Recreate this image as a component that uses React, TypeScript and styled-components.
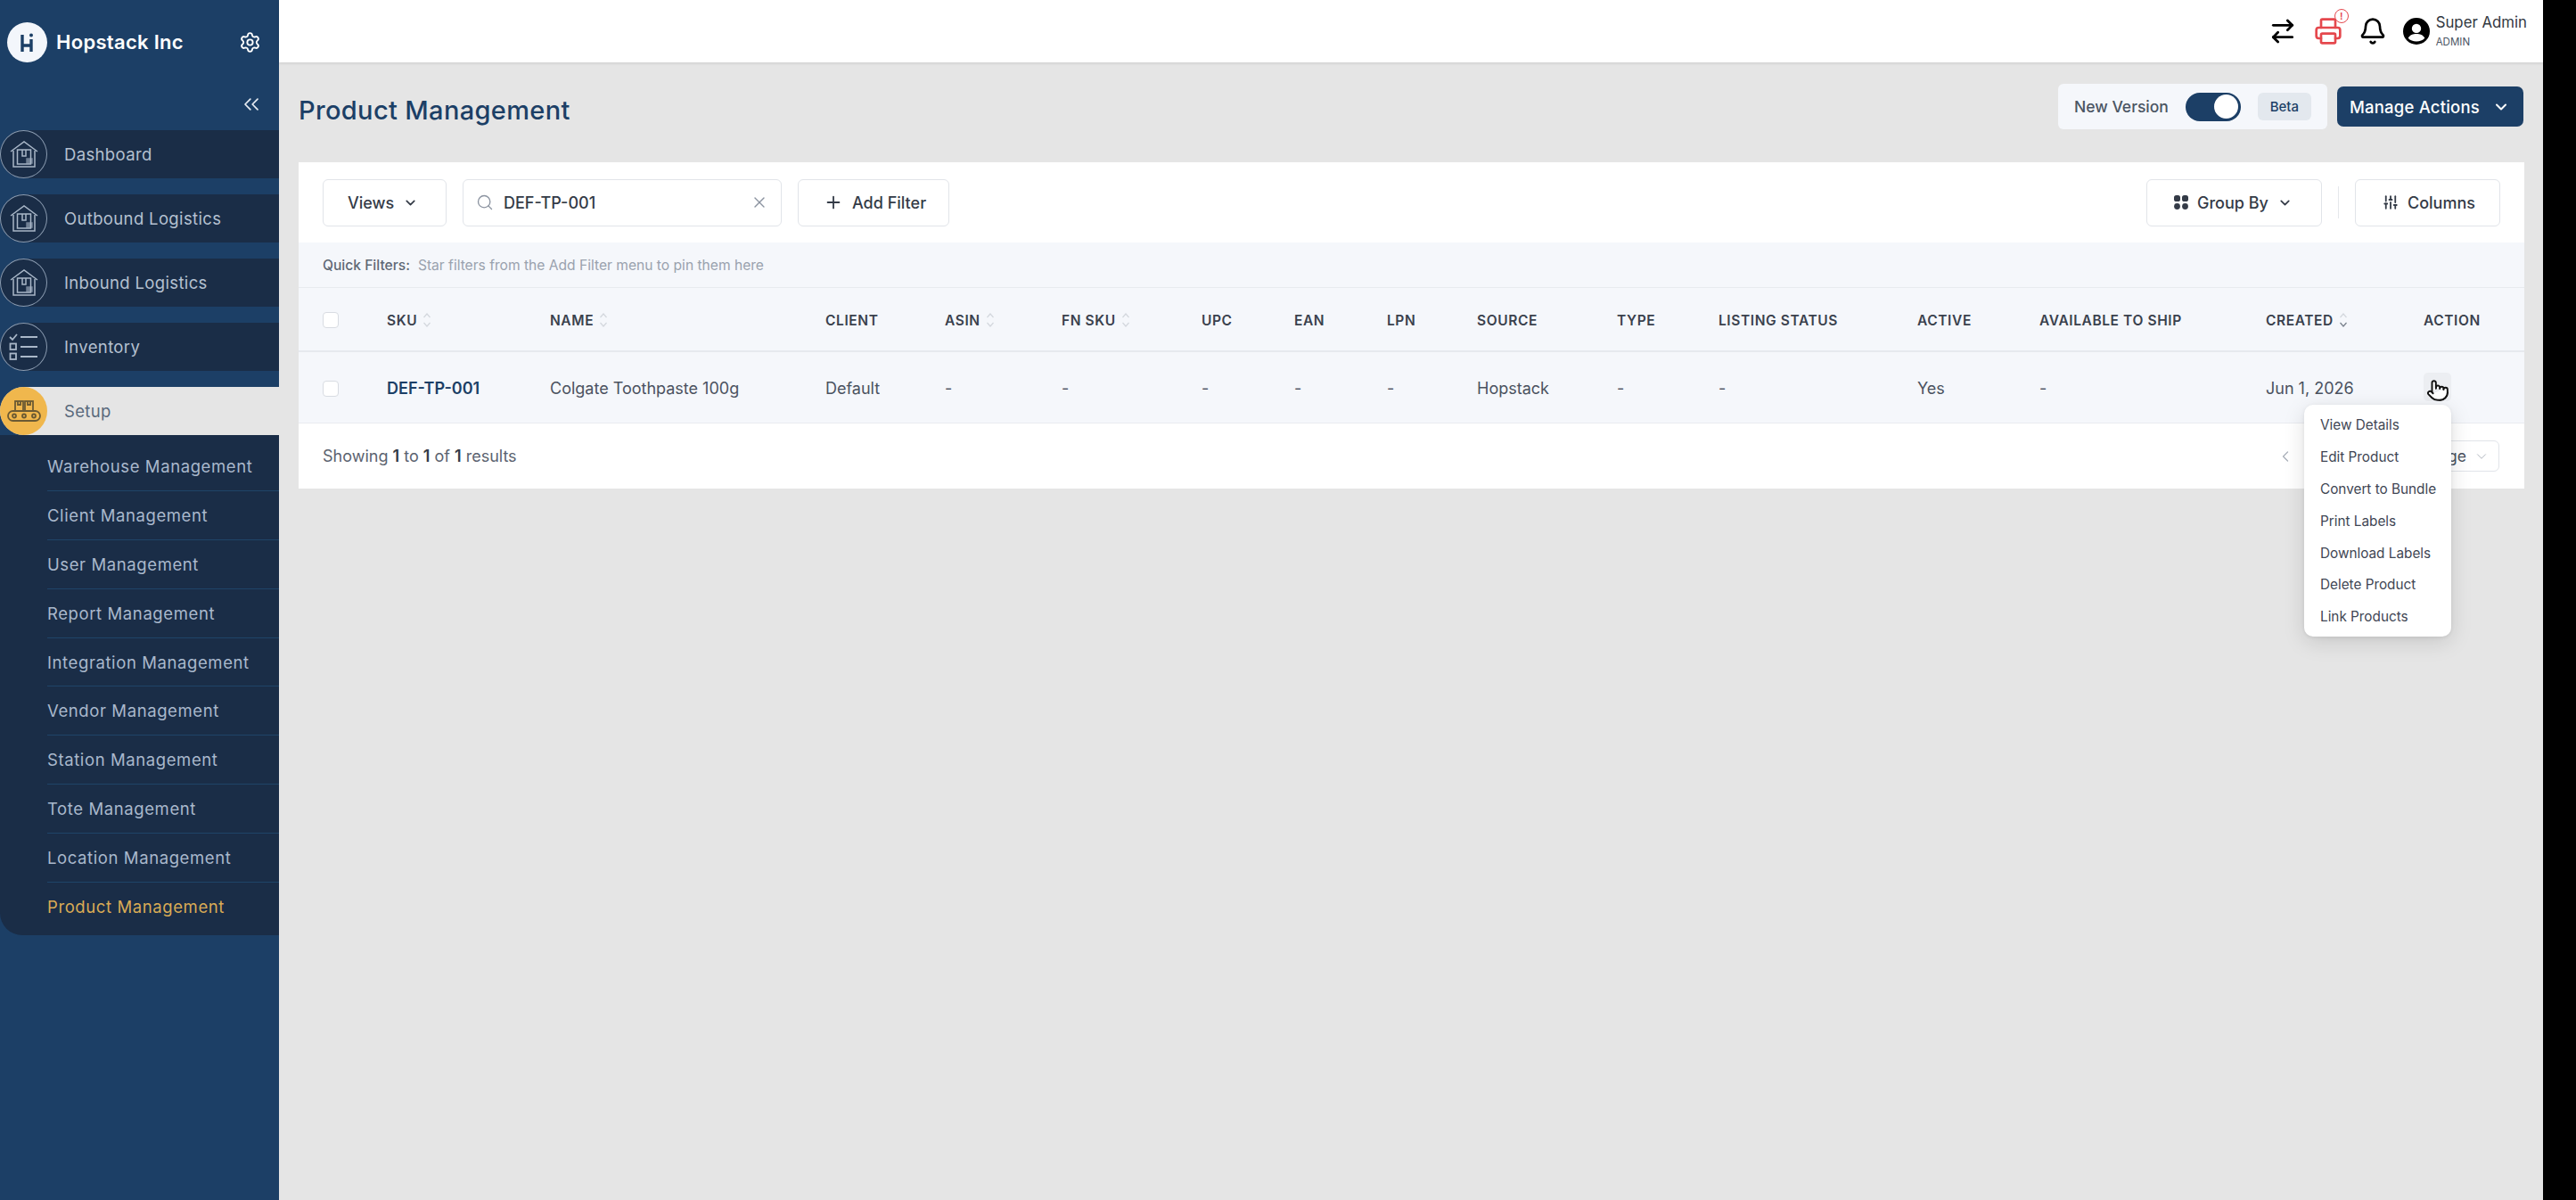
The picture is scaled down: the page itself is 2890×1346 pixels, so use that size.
import styled, { createGlobalStyle } from "styled-components";
import {
  ArrowRightLeft,
  Bell,
  ChevronDown,
  ChevronLeft,
  ChevronsLeft,
  Plus,
  Pointer,
  Printer,
  Search,
  Settings,
  SlidersVertical,
  X,
} from "lucide-react";

const NAVY = "#1c3f66";
const DARK = "#1a2d47";

const GlobalStyle = createGlobalStyle`
  html, body {
    margin: 0;
    padding: 0;
    background: #000000;
  }
  * {
    box-sizing: border-box;
  }
`;

const Page = styled.div`
  display: flex;
  width: 2853px;
  height: 1346px;
  overflow: hidden;
  background: #e5e5e5;
  font-family: "Inter", "Liberation Sans", sans-serif;
`;

/* sidebar */

const Sidebar = styled.aside`
  flex: 0 0 313px;
  display: flex;
  flex-direction: column;
  background: ${NAVY};
  color: #b4c0d0;
`;

const Brand = styled.div`
  height: 94px;
  display: flex;
  align-items: center;
  padding-left: 8px;
  padding-right: 20px;
  color: #ffffff;
`;

const BrandName = styled.div`
  flex: 1;
  margin-left: 10px;
  font-size: 22px;
  font-weight: 600;
  letter-spacing: 0.3px;
`;

const Collapse = styled.div`
  height: 52px;
  display: flex;
  align-items: flex-start;
  justify-content: flex-end;
  padding: 9px 17px 0 0;
  color: #e6ebf2;
`;

const NavList = styled.nav`
  display: flex;
  flex-direction: column;
  gap: 18px;
`;

const NavRow = styled.div<{ $active?: boolean }>`
  height: 54px;
  display: flex;
  align-items: center;
  gap: 19px;
  border-radius: 27px 0 0 27px;
  background: ${(p) => (p.$active ? "#e5e5e5" : DARK)};
  color: ${(p) => (p.$active ? "#5a6a7c" : "#b4c0d0")};
  font-size: 18.5px;
  font-weight: 400;
  letter-spacing: 0.35px;
`;

const IconCircle = styled.div<{ $active?: boolean }>`
  flex: 0 0 53px;
  height: 54px;
  display: flex;
  align-items: center;
  justify-content: center;
  border-radius: 50%;
  border: ${(p) => (p.$active ? "none" : "1.5px solid #8b9cb1")};
  background: ${(p) => (p.$active ? "#f0b74d" : DARK)};
  color: ${(p) => (p.$active ? "#6b5a33" : "#a9b7c8")};
`;

const SubMenu = styled.div`
  margin-top: -18px;
  padding: 8px 0 4px 53px;
  background: ${DARK};
  border-radius: 0 0 0 25px;
`;

const SubItem = styled.div<{ $active?: boolean }>`
  height: 54.9px;
  display: flex;
  align-items: center;
  border-bottom: 1.5px solid #1f4468;
  color: ${(p) => (p.$active ? "#d9ab55" : "#a9b8cc")};
  font-size: 18.5px;
  letter-spacing: 0.6px;
  &:last-child {
    border-bottom: none;
  }
`;

/* main */

const Main = styled.main`
  flex: 1;
  min-width: 0;
  display: flex;
  flex-direction: column;
`;

const TopBar = styled.header`
  height: 70px;
  display: flex;
  align-items: center;
  justify-content: flex-end;
  padding-right: 18px;
  background: #ffffff;
  box-shadow: 0 1px 3px rgba(0, 0, 0, 0.12);
  color: #000000;
`;

const TopIcon = styled.div<{ $mr: number }>`
  position: relative;
  display: flex;
  margin-right: ${(p) => p.$mr}px;
`;

const AlertBadge = styled.span`
  position: absolute;
  top: -9px;
  right: -7px;
  width: 16px;
  height: 16px;
  display: flex;
  align-items: center;
  justify-content: center;
  border-radius: 50%;
  background: #ffffff;
  border: 1.5px solid #e5484d;
  color: #e5484d;
  font-size: 11px;
  font-weight: 600;
`;

const UserInfo = styled.div`
  margin-left: 7px;
  display: flex;
  flex-direction: column;
  gap: 6px;
  margin-top: -1px;
`;

const UserName = styled.div`
  font-size: 16.8px;
  color: #33383f;
  line-height: 20px;
`;

const UserRole = styled.div`
  font-size: 11.5px;
  color: #4b5563;
  line-height: 13px;
`;

const PageHead = styled.div`
  height: 112px;
  display: flex;
  align-items: flex-start;
  padding: 24px 22px 0 22px;
`;

const Title = styled.h1`
  flex: 1;
  margin: 9px 0 0;
  font-size: 29px;
  line-height: 42px;
  font-weight: 500;
  color: ${NAVY};
  letter-spacing: 0.35px;
`;

const VersionPanel = styled.div`
  width: 302px;
  height: 51px;
  display: flex;
  align-items: center;
  padding-left: 18px;
  background: #f5f7fb;
  border-radius: 6px;
  font-size: 17.5px;
  font-weight: 500;
  color: #4b5563;
`;

const Toggle = styled.div`
  width: 62px;
  height: 32px;
  margin-left: 19px;
  display: flex;
  align-items: center;
  justify-content: flex-end;
  padding-right: 3px;
  border-radius: 16px;
  background: ${NAVY};
`;

const Knob = styled.div`
  width: 27px;
  height: 27px;
  border-radius: 50%;
  background: #ffffff;
`;

const BetaTag = styled.div`
  width: 60px;
  height: 31px;
  margin-left: 19px;
  display: flex;
  align-items: center;
  justify-content: center;
  border-radius: 6px;
  background: #e3e8ee;
  font-size: 15px;
  font-weight: 500;
  color: ${NAVY};
`;

const ManageButton = styled.div`
  width: 209px;
  height: 45px;
  margin: 3px 0 0 11px;
  display: flex;
  align-items: center;
  padding-left: 14px;
  gap: 14px;
  border-radius: 7px;
  background: ${NAVY};
  color: #ffffff;
  font-size: 18.5px;
  font-weight: 500;
  letter-spacing: 0.2px;
`;

const Card = styled.section`
  position: relative;
  margin: 0 21px 0 22px;
  background: #ffffff;
`;

const Toolbar = styled.div`
  height: 90px;
  display: flex;
  align-items: center;
  padding: 0 27px;
  gap: 18px;
`;

const OutlineButton = styled.div<{ $w: number; $pl: number }>`
  width: ${(p) => p.$w}px;
  height: 53px;
  display: flex;
  align-items: center;
  gap: 10px;
  padding-left: ${(p) => p.$pl}px;
  border: 1.5px solid #e1e4e9;
  border-radius: 6px;
  background: #ffffff;
  color: #343b47;
  font-size: 18px;
  font-weight: 500;
`;

const SearchBox = styled.div`
  width: 358px;
  height: 53px;
  display: flex;
  align-items: center;
  padding: 0 14px 0 14px;
  border: 1.5px solid #e1e4e9;
  border-radius: 6px;
  color: #8b93a0;
`;

const SearchValue = styled.div`
  flex: 1;
  margin-left: 11px;
  font-size: 18px;
  font-weight: 500;
  color: #343b47;
`;

const Spacer = styled.div`
  flex: 1;
`;

const Divider = styled.div`
  width: 1px;
  height: 36px;
  background: #e5e7eb;
`;

const QuickFilters = styled.div`
  height: 51px;
  display: flex;
  align-items: center;
  gap: 9px;
  padding-left: 27px;
  background: #f5f7fb;
  border-bottom: 1.5px solid #e8ebef;
  font-size: 15.6px;
  color: #9aa2ae;
`;

const QuickLabel = styled.span`
  font-weight: 500;
  color: #5f6875;
`;

const TableRow = styled.div<{ $head?: boolean }>`
  display: grid;
  grid-template-columns: 72px 183px 309px 134px 131px 157px 104px 104px 101px 157px 114px 223px 137px 254px 177px 1fr;
  align-items: center;
  height: ${(p) => (p.$head ? 72 : 80)}px;
  padding: 2px 0 0 27px;
  background: #f5f7fb;
  border-bottom: ${(p) => (p.$head ? "2px solid #e6e9ee" : "1.5px solid #eaecf0")};
`;

const HeadCell = styled.div`
  display: flex;
  align-items: center;
  gap: 6px;
  font-size: 15.5px;
  font-weight: 600;
  letter-spacing: 0.6px;
  color: #3a414d;
  white-space: nowrap;
`;

const Cell = styled.div<{ $link?: boolean }>`
  font-size: 18px;
  font-weight: ${(p) => (p.$link ? 600 : 400)};
  color: ${(p) => (p.$link ? NAVY : "#4b5260")};
  white-space: nowrap;
`;

const Checkbox = styled.div`
  width: 18px;
  height: 18px;
  background: #ffffff;
  border: 1.5px solid #d8dce2;
  border-radius: 4px;
`;

const ActionButton = styled.div`
  position: relative;
  width: 31px;
  height: 32px;
  margin-top: -3px;
  border-radius: 5px;
  background: #eceef2;
`;

const HandCursor = styled.div`
  position: absolute;
  top: 7px;
  left: 3px;
  display: flex;
  color: #111111;
`;

const Footer = styled.div`
  height: 73px;
  display: flex;
  align-items: center;
  justify-content: space-between;
  padding: 0 28px 0 27px;
  font-size: 18px;
  color: #5b6370;
`;

const Strong = styled.b`
  font-weight: 600;
  color: #343b47;
`;

const Pager = styled.div`
  display: flex;
  align-items: center;
  gap: 76px;
  color: #a9afb9;
`;

const PerPage = styled.div`
  width: 154px;
  height: 35px;
  display: flex;
  align-items: center;
  justify-content: flex-end;
  gap: 8px;
  padding-right: 10px;
  border: 1.5px solid #e1e4e9;
  border-radius: 6px;
  font-size: 17.5px;
  color: #4b5260;
`;

const Menu = styled.div`
  position: absolute;
  top: 272px;
  right: 82px;
  width: 165px;
  height: 260px;
  padding: 5px 0 0 18px;
  background: #ffffff;
  border-radius: 10px;
  box-shadow: 0 6px 24px rgba(0, 0, 0, 0.13), 0 1px 4px rgba(0, 0, 0, 0.08);
`;

const MenuItem = styled.div`
  height: 35.8px;
  display: flex;
  align-items: center;
  font-size: 15.3px;
  color: #3f4654;
  white-space: nowrap;
`;

/* drawings */

const HopstackLogo = () => (
  <svg width="45" height="45" viewBox="0 0 45 45">
    <circle cx="22.5" cy="22.5" r="22.5" fill="#f3f6fb" />
    <path
      d="M17 14v19M27 19v14M17 26h10"
      stroke={NAVY}
      strokeWidth="3.4"
      fill="none"
    />
    <circle cx="27" cy="14.5" r="2" fill={NAVY} />
  </svg>
);

const WarehouseIcon = () => (
  <svg width="34" height="34" viewBox="0 0 34 34" fill="none" stroke="currentColor" strokeWidth="1.5">
    <path d="M2 14 17 3l15 11" />
    <path d="M5 13v18h24V13" />
    <rect x="9.5" y="12" width="15" height="16" />
    <path d="M15 12v7h4v-7" />
    <rect x="20" y="22" width="6" height="5" fill="currentColor" opacity=".6" />
  </svg>
);

const ChecklistIcon = () => (
  <svg width="34" height="30" viewBox="0 0 34 30" fill="none" stroke="currentColor" strokeWidth="1.8">
    <path d="m1 4 3 3 5-6" />
    <path d="M13 4h19M13 15h19M13 26h19" />
    <rect x="1.5" y="11.5" width="6.5" height="6.5" />
    <rect x="1.5" y="22.5" width="6.5" height="6.5" />
  </svg>
);

const ConveyorIcon = () => (
  <svg width="38" height="28" viewBox="0 0 38 28" fill="none" stroke="currentColor" strokeWidth="1.8">
    <rect x="9" y="3" width="9" height="11" />
    <rect x="20" y="3" width="9" height="11" />
    <path d="M12 3v4h3V3M23 3v4h3V3" />
    <rect x="1" y="14" width="36" height="11" rx="5.5" />
    <circle cx="8" cy="19.5" r="2" />
    <circle cx="19" cy="19.5" r="2" />
    <circle cx="30" cy="19.5" r="2" />
  </svg>
);

const UserCircle = () => (
  <svg width="30" height="30" viewBox="0 0 29 29">
    <circle cx="14.5" cy="14.5" r="14.5" fill="#000000" />
    <circle cx="14.5" cy="11.5" r="5" fill="#ffffff" />
    <path d="M5.5 22c2-3.6 5.2-4.6 9-4.6s7 1 9 4.6c-2.2 2.4-5.4 3.6-9 3.6s-6.800-1.200-9-3.600z" fill="#ffffff" />
  </svg>
);

const GroupIcon = () => (
  <svg width="16" height="16" viewBox="0 0 16 16" fill="#343b47">
    <rect x="0" y="0" width="7" height="7" rx="2.6" />
    <rect x="9" y="0" width="7" height="7" rx="2.6" />
    <circle cx="3.5" cy="12.5" r="3.4" />
    <circle cx="12.5" cy="12.5" r="3.4" />
  </svg>
);

const SortIcon = ({ down }: { down?: boolean }) => (
  <svg width="10" height="18" viewBox="0 0 10 18" fill="none" strokeWidth="1.2">
    <path d="M1.5 6 5 2l3.5 4" stroke="#d3d7dd" />
    <path d="M1.5 12 5 16l3.5-4" stroke={down ? "#767e8a" : "#d3d7dd"} />
  </svg>
);

const navItems = [
  { label: "Dashboard", icon: <WarehouseIcon /> },
  { label: "Outbound Logistics", icon: <WarehouseIcon /> },
  { label: "Inbound Logistics", icon: <WarehouseIcon /> },
  { label: "Inventory", icon: <ChecklistIcon /> },
];

const subItems = [
  "Warehouse Management",
  "Client Management",
  "User Management",
  "Report Management",
  "Integration Management",
  "Vendor Management",
  "Station Management",
  "Tote Management",
  "Location Management",
  "Product Management",
];

const columns = [
  { label: "SKU", sort: true },
  { label: "NAME", sort: true },
  { label: "CLIENT" },
  { label: "ASIN", sort: true },
  { label: "FN SKU", sort: true },
  { label: "UPC" },
  { label: "EAN" },
  { label: "LPN" },
  { label: "SOURCE" },
  { label: "TYPE" },
  { label: "LISTING STATUS" },
  { label: "ACTIVE" },
  { label: "AVAILABLE TO SHIP" },
  { label: "CREATED", sort: true, down: true },
  { label: "ACTION" },
];

const rowValues = [
  "Colgate Toothpaste 100g",
  "Default",
  "-",
  "-",
  "-",
  "-",
  "-",
  "Hopstack",
  "-",
  "-",
  "Yes",
  "-",
  "Jun 1, 2026",
];

const menuItems = [
  "View Details",
  "Edit Product",
  "Convert to Bundle",
  "Print Labels",
  "Download Labels",
  "Delete Product",
  "Link Products",
];

const App = () => {
  return (
    <Page>
      <GlobalStyle />
      <Sidebar>
        <Brand>
          <HopstackLogo />
          <BrandName>Hopstack Inc</BrandName>
          <Settings size={25} strokeWidth={1.8} />
        </Brand>
        <Collapse>
          <ChevronsLeft size={28} strokeWidth={1.5} />
        </Collapse>
        <NavList>
          {navItems.map((item) => (
            <NavRow key={item.label}>
              <IconCircle>{item.icon}</IconCircle>
              {item.label}
            </NavRow>
          ))}
          <NavRow $active>
            <IconCircle $active>
              <ConveyorIcon />
            </IconCircle>
            Setup
          </NavRow>
          <SubMenu>
            {subItems.map((label) => (
              <SubItem key={label} $active={label === "Product Management"}>
                {label}
              </SubItem>
            ))}
          </SubMenu>
        </NavList>
      </Sidebar>

      <Main>
        <TopBar>
          <TopIcon $mr={19}>
            <ArrowRightLeft size={32} strokeWidth={2.1} />
          </TopIcon>
          <TopIcon $mr={18}>
            <Printer size={32} strokeWidth={2} color="#e5484d" />
            <AlertBadge>!</AlertBadge>
          </TopIcon>
          <TopIcon $mr={18}>
            <Bell size={32} strokeWidth={2} />
          </TopIcon>
          <TopIcon $mr={0}>
            <UserCircle />
          </TopIcon>
          <UserInfo>
            <UserName>Super Admin</UserName>
            <UserRole>ADMIN</UserRole>
          </UserInfo>
        </TopBar>

        <PageHead>
          <Title>Product Management</Title>
          <VersionPanel>
            New Version
            <Toggle>
              <Knob />
            </Toggle>
            <BetaTag>Beta</BetaTag>
          </VersionPanel>
          <ManageButton>
            Manage Actions
            <ChevronDown size={20} strokeWidth={2.4} />
          </ManageButton>
        </PageHead>

        <Card>
          <Toolbar>
            <OutlineButton $w={139} $pl={27}>
              Views
              <ChevronDown size={17} strokeWidth={2.4} />
            </OutlineButton>
            <SearchBox>
              <Search size={20} strokeWidth={1.6} />
              <SearchValue>DEF-TP-001</SearchValue>
              <X size={20} strokeWidth={1.6} />
            </SearchBox>
            <OutlineButton $w={170} $pl={28}>
              <Plus size={22} strokeWidth={2} />
              Add Filter
            </OutlineButton>
            <Spacer />
            <OutlineButton $w={197} $pl={30}>
              <GroupIcon />
              Group By
              <ChevronDown size={17} strokeWidth={2.4} />
            </OutlineButton>
            <Divider />
            <OutlineButton $w={163} $pl={30}>
              <SlidersVertical size={18} strokeWidth={2.4} />
              Columns
            </OutlineButton>
          </Toolbar>

          <QuickFilters>
            <QuickLabel>Quick Filters:</QuickLabel>
            Star filters from the Add Filter menu to pin them here
          </QuickFilters>

          <TableRow $head>
            <Checkbox />
            {columns.map((col) => (
              <HeadCell key={col.label}>
                {col.label}
                {col.sort && <SortIcon down={col.down} />}
              </HeadCell>
            ))}
          </TableRow>

          <TableRow>
            <Checkbox />
            <Cell $link>DEF-TP-001</Cell>
            {rowValues.map((value, i) => (
              <Cell key={i}>{value}</Cell>
            ))}
            <ActionButton>
              <HandCursor>
                <Pointer size={26} strokeWidth={1.8} fill="#ffffff" />
              </HandCursor>
            </ActionButton>
          </TableRow>

          <Footer>
            <div>
              Showing <Strong>1</Strong> to <Strong>1</Strong> of <Strong>1</Strong> results
            </div>
            <Pager>
              <ChevronLeft size={20} strokeWidth={1.5} />
              <PerPage>
                25 per page
                <ChevronDown size={18} strokeWidth={1.2} color="#a9afb9" />
              </PerPage>
            </Pager>
          </Footer>

          <Menu>
            {menuItems.map((label) => (
              <MenuItem key={label}>{label}</MenuItem>
            ))}
          </Menu>
        </Card>
      </Main>
    </Page>
  );
};

export default App;
